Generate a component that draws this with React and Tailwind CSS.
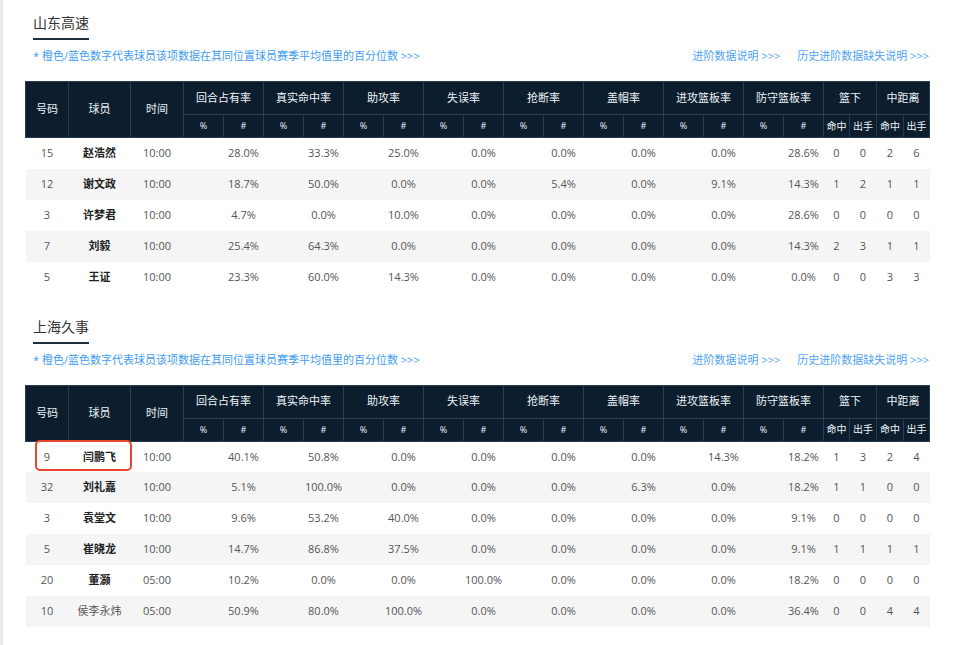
import React from "react";

const groups = ["回合占有率", "真实命中率", "助攻率", "失误率", "抢断率", "盖帽率", "进攻篮板率", "防守篮板率"];

const teams = [
  {
    name: "山东高速",
    rows: [
      ["15", "赵浩然", "10:00", ["28.0%", "33.3%", "25.0%", "0.0%", "0.0%", "0.0%", "0.0%", "28.6%"], [0, 0, 2, 6]],
      ["12", "谢文政", "10:00", ["18.7%", "50.0%", "0.0%", "0.0%", "5.4%", "0.0%", "9.1%", "14.3%"], [1, 2, 1, 1]],
      ["3", "许梦君", "10:00", ["4.7%", "0.0%", "10.0%", "0.0%", "0.0%", "0.0%", "0.0%", "28.6%"], [0, 0, 0, 0]],
      ["7", "刘毅", "10:00", ["25.4%", "64.3%", "0.0%", "0.0%", "0.0%", "0.0%", "0.0%", "14.3%"], [2, 3, 1, 1]],
      ["5", "王证", "10:00", ["23.3%", "60.0%", "14.3%", "0.0%", "0.0%", "0.0%", "0.0%", "0.0%"], [0, 0, 3, 3]],
    ],
  },
  {
    name: "上海久事",
    highlight: true,
    rows: [
      ["9", "闫鹏飞", "10:00", ["40.1%", "50.8%", "0.0%", "0.0%", "0.0%", "0.0%", "14.3%", "18.2%"], [1, 3, 2, 4]],
      ["32", "刘礼嘉", "10:00", ["5.1%", "100.0%", "0.0%", "0.0%", "0.0%", "6.3%", "0.0%", "18.2%"], [1, 1, 0, 0]],
      ["3", "袁堂文", "10:00", ["9.6%", "53.2%", "40.0%", "0.0%", "0.0%", "0.0%", "0.0%", "9.1%"], [0, 0, 0, 0]],
      ["5", "崔晓龙", "10:00", ["14.7%", "86.8%", "37.5%", "0.0%", "0.0%", "0.0%", "0.0%", "9.1%"], [1, 1, 1, 1]],
      ["20", "董灏", "05:00", ["10.2%", "0.0%", "0.0%", "100.0%", "0.0%", "0.0%", "0.0%", "18.2%"], [0, 0, 0, 0]],
      ["10", "侯李永炜", "05:00", ["50.9%", "80.0%", "100.0%", "0.0%", "0.0%", "0.0%", "0.0%", "36.4%"], [0, 0, 4, 4], true],
    ],
  },
];

const th = "border border-[#2a3d50] font-normal text-center";

const TeamTable = ({ team }) => (
  <div className="mt-[11px] w-[904px] first:mt-0">
    {/* title + notes */}
    <div className="pl-[8px] pt-[10px]">
      <div className="inline-block border-b-2 border-[#1f2d3d] pb-[5px] text-[14px] leading-[20px] text-[#333]">
        {team.name}
      </div>
    </div>
    <div className="mt-[8px] mb-[17px] flex items-center justify-between pl-[8px] text-[11px] leading-[16px] text-[#3f9cf0]">
      <span>* 橙色/蓝色数字代表球员该项数据在其同位置球员赛季平均值里的百分位数 &gt;&gt;&gt;</span>
      <div className="flex gap-[17px] text-[#4ea3f2]">
        <span>进阶数据说明 &gt;&gt;&gt;</span>
        <span>历史进阶数据缺失说明 &gt;&gt;&gt;</span>
      </div>
    </div>

    <div className="relative">
      <table className="w-[904px] table-fixed border-collapse text-[11px]">
        <colgroup>
          <col className="w-[43px]" />
          <col className="w-[62px]" />
          <col className="w-[53px]" />
          {groups.map((g) => (
            <React.Fragment key={g}>
              <col className="w-[40px]" />
              <col className="w-[40px]" />
            </React.Fragment>
          ))}
          <col className="w-[26px]" />
          <col className="w-[27px]" />
          <col className="w-[27px]" />
          <col className="w-[26px]" />
        </colgroup>
        <thead className="bg-[#0c1d2e] text-[#eef3f8]">
          <tr className="h-[33px]">
            <th rowSpan={2} className={th}>号码</th>
            <th rowSpan={2} className={th}>球员</th>
            <th rowSpan={2} className={th}>时间</th>
            {groups.map((g) => (
              <th key={g} colSpan={2} className={th}>{g}</th>
            ))}
            <th colSpan={2} className={th}>篮下</th>
            <th colSpan={2} className={th}>中距离</th>
          </tr>
          <tr className="h-[23px] text-[9px]">
            {groups.map((g) => (
              <React.Fragment key={g}>
                <th className={th}>%</th>
                <th className={th}>#</th>
              </React.Fragment>
            ))}
            <th className={`${th} text-[10px]`}>命中</th>
            <th className={`${th} text-[10px]`}>出手</th>
            <th className={`${th} text-[10px]`}>命中</th>
            <th className={`${th} text-[10px]`}>出手</th>
          </tr>
        </thead>
        <tbody className="text-[#555]">
          {team.rows.map(([no, name, time, vals, shots, dim], i) => (
            <tr key={no + name} className={`h-[31px] text-center ${i % 2 ? "bg-[#f5f5f5]" : "bg-white"}`}>
              <td>{no}</td>
              <td className={dim ? "text-[#555]" : "font-bold text-[#222]"}>{name}</td>
              <td>{time}</td>
              {vals.map((v, j) => (
                <React.Fragment key={j}>
                  <td></td>
                  <td>{v}</td>
                </React.Fragment>
              ))}
              {shots.map((s, j) => (
                <td key={"s" + j}>{s}</td>
              ))}
            </tr>
          ))}
        </tbody>
      </table>
      {team.highlight && (
        <div className="absolute left-[10px] top-[55px] h-[31px] w-[97px] rounded-[5px] border-2 border-[#e8452f]" />
      )}
    </div>
  </div>
);

export default function App() {
  return (
    <div
      className="min-h-[645px] w-[960px] border-l-[3px] border-[#ebebef] bg-white pl-[22px]"
      style={{ fontFamily: '"Open Sans", "Noto Sans CJK SC", sans-serif' }}
    >
      {teams.map((t) => (
        <TeamTable key={t.name} team={t} />
      ))}
    </div>
  );
}
